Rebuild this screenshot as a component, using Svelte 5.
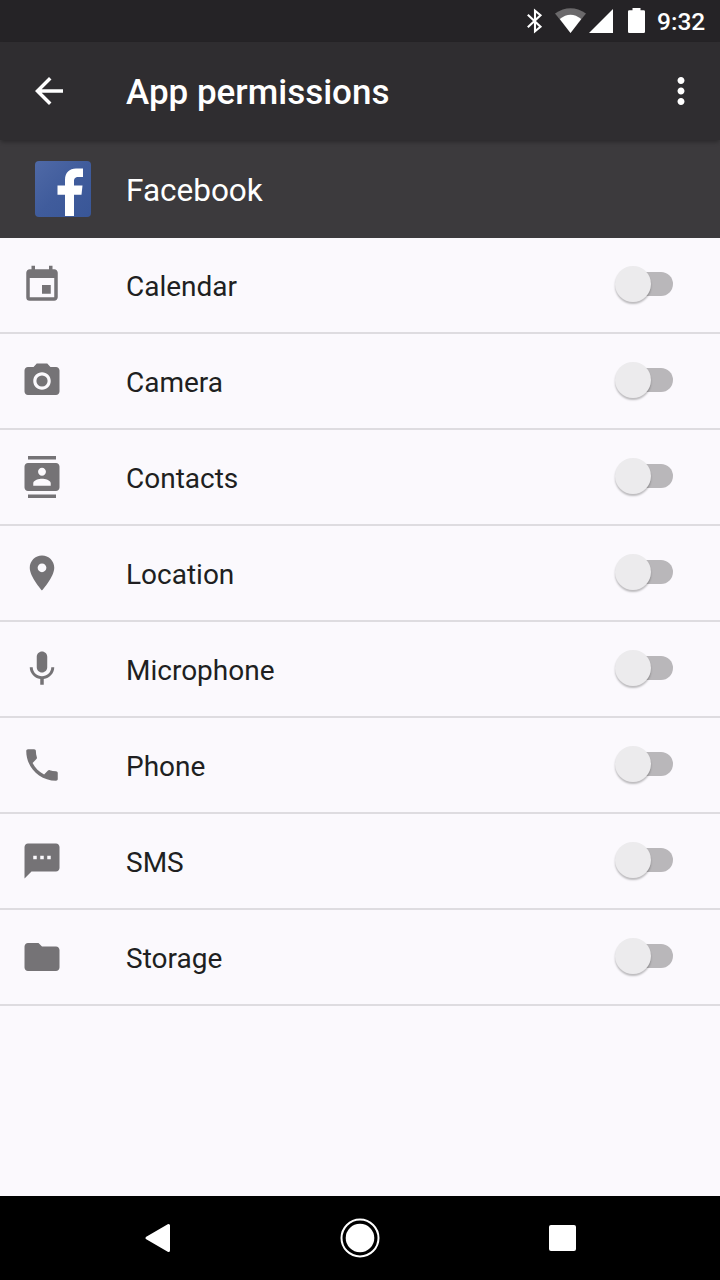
<script lang="ts">
	type Permission = { name: string; icon: string; enabled: boolean };

	let permissions: Permission[] = $state([
		{
			name: 'Calendar',
			icon: 'M17 12h-5v5h5v-5zM16 1v2H8V1H6v2H5c-1.11 0-1.99.9-1.99 2L3 19a2 2 0 0 0 2 2h14c1.1 0 2-.9 2-2V5c0-1.1-.9-2-2-2h-1V1h-2zm3 18H5V8h14v11z',
			enabled: false
		},
		{
			name: 'Camera',
			icon: 'M12 8.8a3.2 3.2 0 1 0 0 6.4 3.2 3.2 0 1 0 0-6.4zM9 2L7.17 4H4c-1.1 0-2 .9-2 2v12c0 1.1.9 2 2 2h16c1.1 0 2-.9 2-2V6c0-1.1-.9-2-2-2h-3.17L15 2H9zm3 15c-2.76 0-5-2.24-5-5s2.24-5 5-5 5 2.24 5 5-2.24 5-5 5z',
			enabled: false
		},
		{
			name: 'Contacts',
			icon: 'M20 0H4v2h16V0zM4 24h16v-2H4v2zM20 4H4c-1.1 0-2 .9-2 2v12c0 1.1.9 2 2 2h16c1.1 0 2-.9 2-2V6c0-1.1-.9-2-2-2zm-8 2.75c1.24 0 2.25 1.01 2.25 2.25s-1.01 2.25-2.25 2.25S9.75 10.24 9.75 9 10.76 6.75 12 6.75zM17 17H7v-1.5c0-1.67 3.33-2.5 5-2.5s5 .83 5 2.5V17z',
			enabled: false
		},
		{
			name: 'Location',
			icon: 'M12 2C8.13 2 5 5.13 5 9c0 5.25 7 13 7 13s7-7.75 7-13c0-3.87-3.13-7-7-7zm0 9.5c-1.38 0-2.5-1.12-2.5-2.5s1.12-2.5 2.5-2.5 2.5 1.12 2.5 2.5-1.12 2.5-2.5 2.5z',
			enabled: false
		},
		{
			name: 'Microphone',
			icon: 'M12 14c1.66 0 2.99-1.34 2.99-3L15 5c0-1.66-1.34-3-3-3S9 3.34 9 5v6c0 1.66 1.34 3 3 3zm5.3-3c0 3-2.54 5.1-5.3 5.1S6.7 14 6.7 11H5c0 3.41 2.72 6.23 6 6.72V21h2v-3.28c3.28-.48 6-3.3 6-6.72h-1.7z',
			enabled: false
		},
		{
			name: 'Phone',
			icon: 'M6.62 10.79c1.44 2.83 3.76 5.14 6.59 6.59l2.2-2.2c.27-.27.67-.36 1.02-.24 1.12.37 2.33.57 3.57.57.55 0 1 .45 1 1V20c0 .55-.45 1-1 1-9.39 0-17-7.61-17-17 0-.55.45-1 1-1h3.5c.55 0 1 .45 1 1 0 1.25.2 2.45.57 3.57.11.35.03.74-.25 1.02l-2.2 2.2z',
			enabled: false
		},
		{
			name: 'SMS',
			icon: 'M20 2H4c-1.1 0-1.99.9-1.99 2L2 22l4-4h14c1.1 0 2-.9 2-2V4c0-1.1-.9-2-2-2zM9 11H7V9h2v2zm4 0h-2V9h2v2zm4 0h-2V9h2v2z',
			enabled: false
		},
		{
			name: 'Storage',
			icon: 'M10 4H4c-1.1 0-1.99.9-1.99 2L2 18c0 1.1.9 2 2 2h16c1.1 0 2-.9 2-2V8c0-1.1-.9-2-2-2h-8l-2-2z',
			enabled: false
		}
	]);
</script>

<div class="screen">
	<div class="status-bar">
		<svg class="bluetooth" width="18" height="26" viewBox="0 0 18 26">
			<path
				d="M1.8 6.8L14.5 18.8 9 23.2V2.8L14.5 7.2 1.8 19.2"
				fill="none"
				stroke="#fff"
				stroke-width="2.1"
			/>
		</svg>
		<svg class="wifi" width="32" height="26" viewBox="0 0 32 26">
			<path d="M0 5.5Q15.5-5 31 5.5L15.5 25z" fill="#6b696b" />
			<path d="M4.8 11Q15.5 2.500 26.2 11L15.5 25z" fill="#fff" />
		</svg>
		<svg class="signal" width="24" height="24" viewBox="0 0 24 24">
			<path d="M24 0v24H0z" fill="#fff" />
		</svg>
		<svg class="battery" width="17" height="25" viewBox="0 0 17 25">
			<path
				d="M4.5 0h8v2.2h3.2q1.3 0 1.3 1.3v20.2q0 1.3-1.3 1.3H1.3Q0 25 0 23.7V3.5q0-1.3 1.3-1.3h3.2z"
				fill="#fff"
			/>
		</svg>
		<span class="clock">9:32</span>
	</div>

	<header class="toolbar">
		<button class="back" aria-label="Back">
			<svg width="42" height="42" viewBox="0 0 24 24">
				<path d="M20 11H7.83l5.59-5.59L12 4l-8 8 8 8 1.41-1.41L7.83 13H20v-2z" fill="#fff" />
			</svg>
		</button>
		<h1>App permissions</h1>
		<button class="more" aria-label="More options">
			<svg width="42" height="42" viewBox="0 0 24 24">
				<path
					d="M12 8c1.1 0 2-.9 2-2s-.9-2-2-2-2 .9-2 2 .9 2 2 2zm0 2c-1.1 0-2 .9-2 2s.9 2 2 2 2-.9 2-2-.9-2-2-2zm0 6c-1.1 0-2 .9-2 2s.9 2 2 2 2-.9 2-2-.9-2-2-2z"
					fill="#fff"
				/>
			</svg>
		</button>
	</header>

	<div class="app-header">
		<svg class="app-icon" width="56" height="56" viewBox="0 0 56 56">
			<defs>
				<linearGradient id="fb" x1="0" y1="0" x2="1" y2="1">
					<stop offset="0" stop-color="#4f69a6" />
					<stop offset="0.5" stop-color="#405c9c" />
					<stop offset="1" stop-color="#395697" />
				</linearGradient>
			</defs>
			<rect width="56" height="56" rx="4" fill="url(#fb)" />
			<path
				d="M30 55V33.8h-7.5v-9.3H30V19C30 11.5 34.5 7.5 41 7.5h7V16h-4.5c-3.5 0-4.5 1.5-4.5 4.5v4h8.5l-1 9.3H39V55z"
				fill="#fff"
			/>
		</svg>
		<span class="app-name">Facebook</span>
	</div>

	<ul class="list">
		{#each permissions as permission}
			<li class="row">
				<svg class="row-icon" width="42" height="42" viewBox="0 0 24 24">
					<path d={permission.icon} />
				</svg>
				<span class="label">{permission.name}</span>
				<button
					class="switch"
					class:on={permission.enabled}
					role="switch"
					aria-checked={permission.enabled}
					aria-label={permission.name}
					onclick={() => (permission.enabled = !permission.enabled)}
				>
					<span class="thumb"></span>
				</button>
			</li>
		{/each}
	</ul>

	<nav class="nav-bar">
		<svg width="28" height="30" viewBox="0 0 28 30">
			<path
				d="M3 15L24.5 2.5v25z"
				fill="#fff"
				stroke="#fff"
				stroke-width="3"
				stroke-linejoin="round"
			/>
		</svg>
		<svg class="home" width="40" height="40" viewBox="0 0 40 40">
			<circle cx="20" cy="20" r="18.5" fill="none" stroke="#fff" stroke-width="2" />
			<circle cx="20" cy="20" r="14.3" fill="#fff" />
		</svg>
		<svg width="27" height="26" viewBox="0 0 27 26">
			<rect width="27" height="26" rx="2" fill="#fff" />
		</svg>
	</nav>
</div>

<style>
	:global(body) {
		margin: 0;
	}
	.screen {
		display: flex;
		flex-direction: column;
		width: 720px;
		height: 1280px;
		overflow: hidden;
		background-color: #fbf9fd;
		font-family: Roboto, sans-serif;
	}
	button {
		all: unset;
		cursor: pointer;
	}
	svg {
		display: block;
		flex: none;
	}

	.status-bar {
		display: flex;
		box-sizing: border-box;
		height: 42px;
		padding: 8px 14px 0 526px;
		background-color: #252326;
		color: #fff;
	}
	.wifi {
		margin-left: 11px;
	}
	.signal {
		margin: 1px 0 0 2px;
	}
	.battery {
		margin-left: 15px;
	}
	.clock {
		margin-left: 12px;
		font-size: 24.5px;
		line-height: 28px;
		font-weight: 500;
	}

	.toolbar {
		display: flex;
		align-items: center;
		box-sizing: border-box;
		height: 98px;
		padding: 0 18px 0 28px;
		background-color: #2f2d30;
		color: #fff;
		box-shadow: 0 3px 4px -1px rgba(0, 0, 0, 0.3);
		z-index: 1;
	}
	h1 {
		flex: 1;
		margin: 4px 0 0 56px;
		font-size: 35px;
		line-height: 42px;
		font-weight: 500;
	}

	.app-header {
		display: flex;
		align-items: center;
		height: 98px;
		padding-left: 35px;
		background-color: #3c3a3d;
		color: #fff;
	}
	.app-name {
		margin: 4px 0 0 35px;
		font-size: 31.5px;
		line-height: 38px;
	}

	.list {
		flex: 1;
		margin: 0;
		padding: 0;
		list-style: none;
	}
	.row {
		display: flex;
		align-items: center;
		box-sizing: border-box;
		height: 96px;
		padding: 0 47px 0 21px;
		border-bottom: 2px solid #dedce0;
	}
	.row-icon {
		fill: #757376;
	}
	.label {
		flex: 1;
		margin: 4px 0 0 63px;
		font-size: 28px;
		line-height: 34px;
		color: #201f21;
	}
	.switch {
		display: flex;
		align-items: center;
		width: 50px;
		height: 24px;
		margin-top: -2px;
		border-radius: 12px;
		background-color: #b9b7ba;
	}
	.thumb {
		flex: none;
		width: 36px;
		height: 36px;
		margin-left: -8.5px;
		border-radius: 50%;
		background-color: #ecebed;
		box-shadow: 0 2px 2px rgba(0, 0, 0, 0.25);
	}
	.on .thumb {
		margin-left: 23px;
		background-color: #009688;
	}

	.nav-bar {
		display: flex;
		align-items: center;
		justify-content: space-between;
		box-sizing: border-box;
		height: 84px;
		padding: 0 144px;
		background-color: #000;
	}
	.home {
		margin: 0 2px 1px 0;
	}
</style>
